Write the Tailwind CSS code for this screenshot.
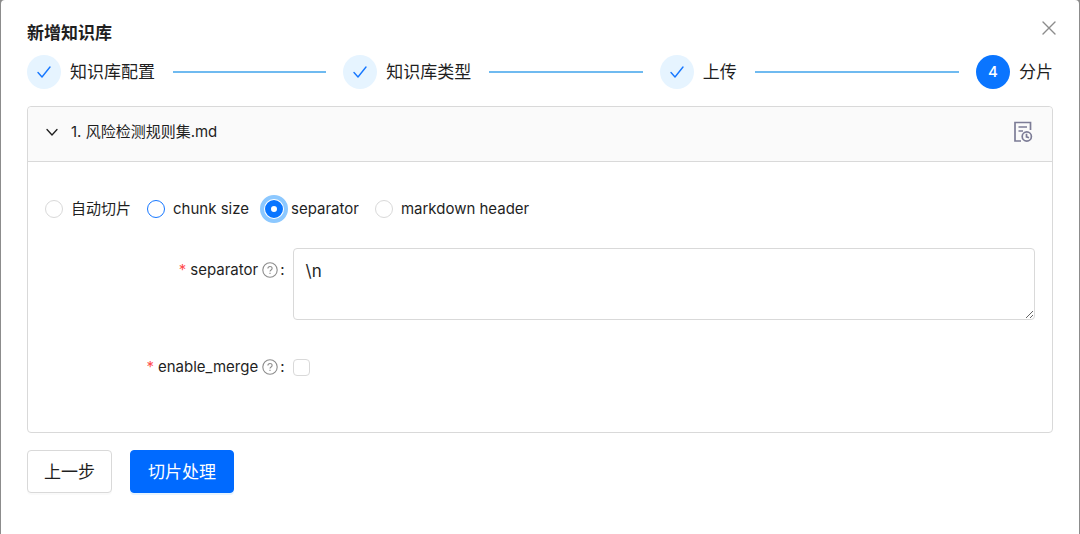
<!DOCTYPE html>
<html lang="zh-CN">
<head>
  <meta charset="UTF-8" />
  <meta name="viewport" content="width=device-width, initial-scale=1.0" />
  <title>新增知识库</title>
  <script src="https://cdn.jsdelivr.net/npm/@tailwindcss/browser@4"></script>
</head>
<body class="bg-[#8c8c8c] font-[Inter,'Noto_Sans_CJK_SC',sans-serif] text-[15px] leading-6 text-[#1f1f1f]">
  <div role="dialog" aria-labelledby="dialogTitle" class="relative mx-px min-h-screen rounded-t bg-white px-[26px] pt-5 pb-10">
    <h1 id="dialogTitle" class="text-[17px] font-semibold leading-[26px]">新增知识库</h1>
    <button type="button" aria-label="关闭" class="absolute top-[18px] right-5 p-0.5 text-[#8c8c8c]">
      <svg class="size-4" viewBox="0 0 16 16" fill="none" stroke="currentColor" stroke-width="1.4" stroke-linecap="round"><path d="M2 2l12 12M14 2L2 14" /></svg>
    </button>

    <!-- 步骤条 -->
    <ol class="mt-[9px] flex gap-[17px] text-[17px] leading-[34px]">
      <li class="flex flex-1 items-center">
        <span class="mr-[9px] flex size-[34px] items-center justify-center rounded-full bg-[#e6f4ff] text-[#1677ff]">
          <svg class="size-[18px]" viewBox="0 0 18 18" fill="none" stroke="currentColor" stroke-width="1.4" stroke-linecap="round" stroke-linejoin="round"><path d="M3 9.5l4 4.5L15 4" /></svg>
        </span>
        <span>知识库配置</span>
        <span class="ml-[18px] h-0.5 flex-1 bg-[#6fbaf0]"></span>
      </li>
      <li class="flex flex-1 items-center">
        <span class="mr-[9px] flex size-[34px] items-center justify-center rounded-full bg-[#e6f4ff] text-[#1677ff]">
          <svg class="size-[18px]" viewBox="0 0 18 18" fill="none" stroke="currentColor" stroke-width="1.4" stroke-linecap="round" stroke-linejoin="round"><path d="M3 9.5l4 4.5L15 4" /></svg>
        </span>
        <span>知识库类型</span>
        <span class="ml-[18px] h-0.5 flex-1 bg-[#6fbaf0]"></span>
      </li>
      <li class="flex flex-1 items-center">
        <span class="mr-[9px] flex size-[34px] items-center justify-center rounded-full bg-[#e6f4ff] text-[#1677ff]">
          <svg class="size-[18px]" viewBox="0 0 18 18" fill="none" stroke="currentColor" stroke-width="1.4" stroke-linecap="round" stroke-linejoin="round"><path d="M3 9.5l4 4.5L15 4" /></svg>
        </span>
        <span>上传</span>
        <span class="ml-[18px] h-0.5 flex-1 bg-[#6fbaf0]"></span>
      </li>
      <li class="flex items-center" aria-current="step">
        <span class="mr-[9px] flex size-[34px] items-center justify-center rounded-full bg-[#0a75ff] text-[15px] font-medium text-white">4</span>
        <span>分片</span>
      </li>
    </ol>

    <!-- 文件切片设置 -->
    <section class="mt-[17px] rounded border border-[#d9d9d9]">
      <div class="flex h-[55px] items-center justify-between rounded-t border-b border-[#d9d9d9] bg-[#fafafa] pr-[19px] pb-1 pl-[17px]">
        <button type="button" aria-expanded="true" class="flex items-center gap-3">
          <svg class="size-[14px]" viewBox="0 0 14 14" fill="none" stroke="currentColor" stroke-width="1.3" stroke-linecap="round" stroke-linejoin="round"><path d="M2 4.5l5 5.5 5-5.5" /></svg>
          <span>1. 风险检测规则集.md</span>
        </button>
        <button type="button" aria-label="切片预览" class="text-[#7c7c96]">
          <svg class="h-[22px] w-5" viewBox="0 0 20 22" fill="none" stroke="currentColor" stroke-width="1.7"><path d="M17.500 9V1.500H2V20h6" /><path d="M5.500 6h8.500M5.500 10h4.500" /><circle cx="13.800" cy="15.500" r="4.600" /><path d="M13.500 12.800v3l2.500 1" /></svg>
        </button>
      </div>

      <form class="px-[17px] pt-[35px] pb-[43px]">
        <div class="flex gap-4">
          <label class="flex items-center gap-2">
            <input type="radio" name="mode" class="size-[18px] appearance-none rounded-full border border-[#d9d9d9] bg-white" />
            自动切片
          </label>
          <label class="flex items-center gap-2">
            <input type="radio" name="mode" class="size-[18px] appearance-none rounded-full border border-[#1677ff] bg-white" />
            chunk size
          </label>
          <label class="flex items-center gap-2">
            <input type="radio" name="mode" checked class="size-[18px] appearance-none rounded-full border-[6px] border-[#0a75ff] bg-white outline-4 outline-offset-1 outline-[#8cc8ff]" />
            separator
          </label>
          <label class="flex items-center gap-2">
            <input type="radio" name="mode" class="size-[18px] appearance-none rounded-full border border-[#d9d9d9] bg-white" />
            markdown header
          </label>
        </div>

        <div class="mt-[27px] flex">
          <label for="separator" class="flex h-11 w-1/4 items-center justify-end pr-2">
            <span class="mr-1 text-[#ff4d4f]">*</span>separator
            <svg class="ml-1 size-4 text-[#8c8c8c]" viewBox="0 0 16 16" fill="none" stroke="currentColor" stroke-width="1.1"><circle cx="8" cy="8" r="7.200" /><path d="M5.900 6.600C5.900 3.700 10.100 3.800 10.100 6.400 10.100 8 8 7.900 8 9.600M8 10.800v1.200" /></svg>
            <span class="ml-0.5">:</span>
          </label>
          <textarea id="separator" class="h-[72px] w-3/4 resize rounded border border-[#d9d9d9] px-3 py-2 text-[17px] leading-7">\n</textarea>
        </div>

        <div class="mt-[25px] flex items-center">
          <label for="enableMerge" class="flex h-11 w-1/4 items-center justify-end pr-2">
            <span class="mr-1 text-[#ff4d4f]">*</span>enable_merge
            <svg class="ml-1 size-4 text-[#8c8c8c]" viewBox="0 0 16 16" fill="none" stroke="currentColor" stroke-width="1.1"><circle cx="8" cy="8" r="7.200" /><path d="M5.900 6.600C5.900 3.700 10.100 3.800 10.100 6.400 10.100 8 8 7.900 8 9.600M8 10.800v1.200" /></svg>
            <span class="ml-0.5">:</span>
          </label>
          <input id="enableMerge" type="checkbox" class="size-[17px] appearance-none rounded border border-[#d9d9d9] bg-white" />
        </div>
      </form>
    </section>

    <div class="mt-[17px] flex gap-[18px] text-[17px] leading-[26px]">
      <button type="button" class="h-[43px] rounded border border-[#d9d9d9] bg-white px-4 shadow-[0_2px_0_rgba(0,0,0,0.02)]">上一步</button>
      <button type="button" class="h-[43px] rounded border border-[#006aff] bg-[#006aff] px-[17px] text-white shadow-[0_2px_0_rgba(5,145,255,0.1)]">切片处理</button>
    </div>
  </div>
</body>
</html>
